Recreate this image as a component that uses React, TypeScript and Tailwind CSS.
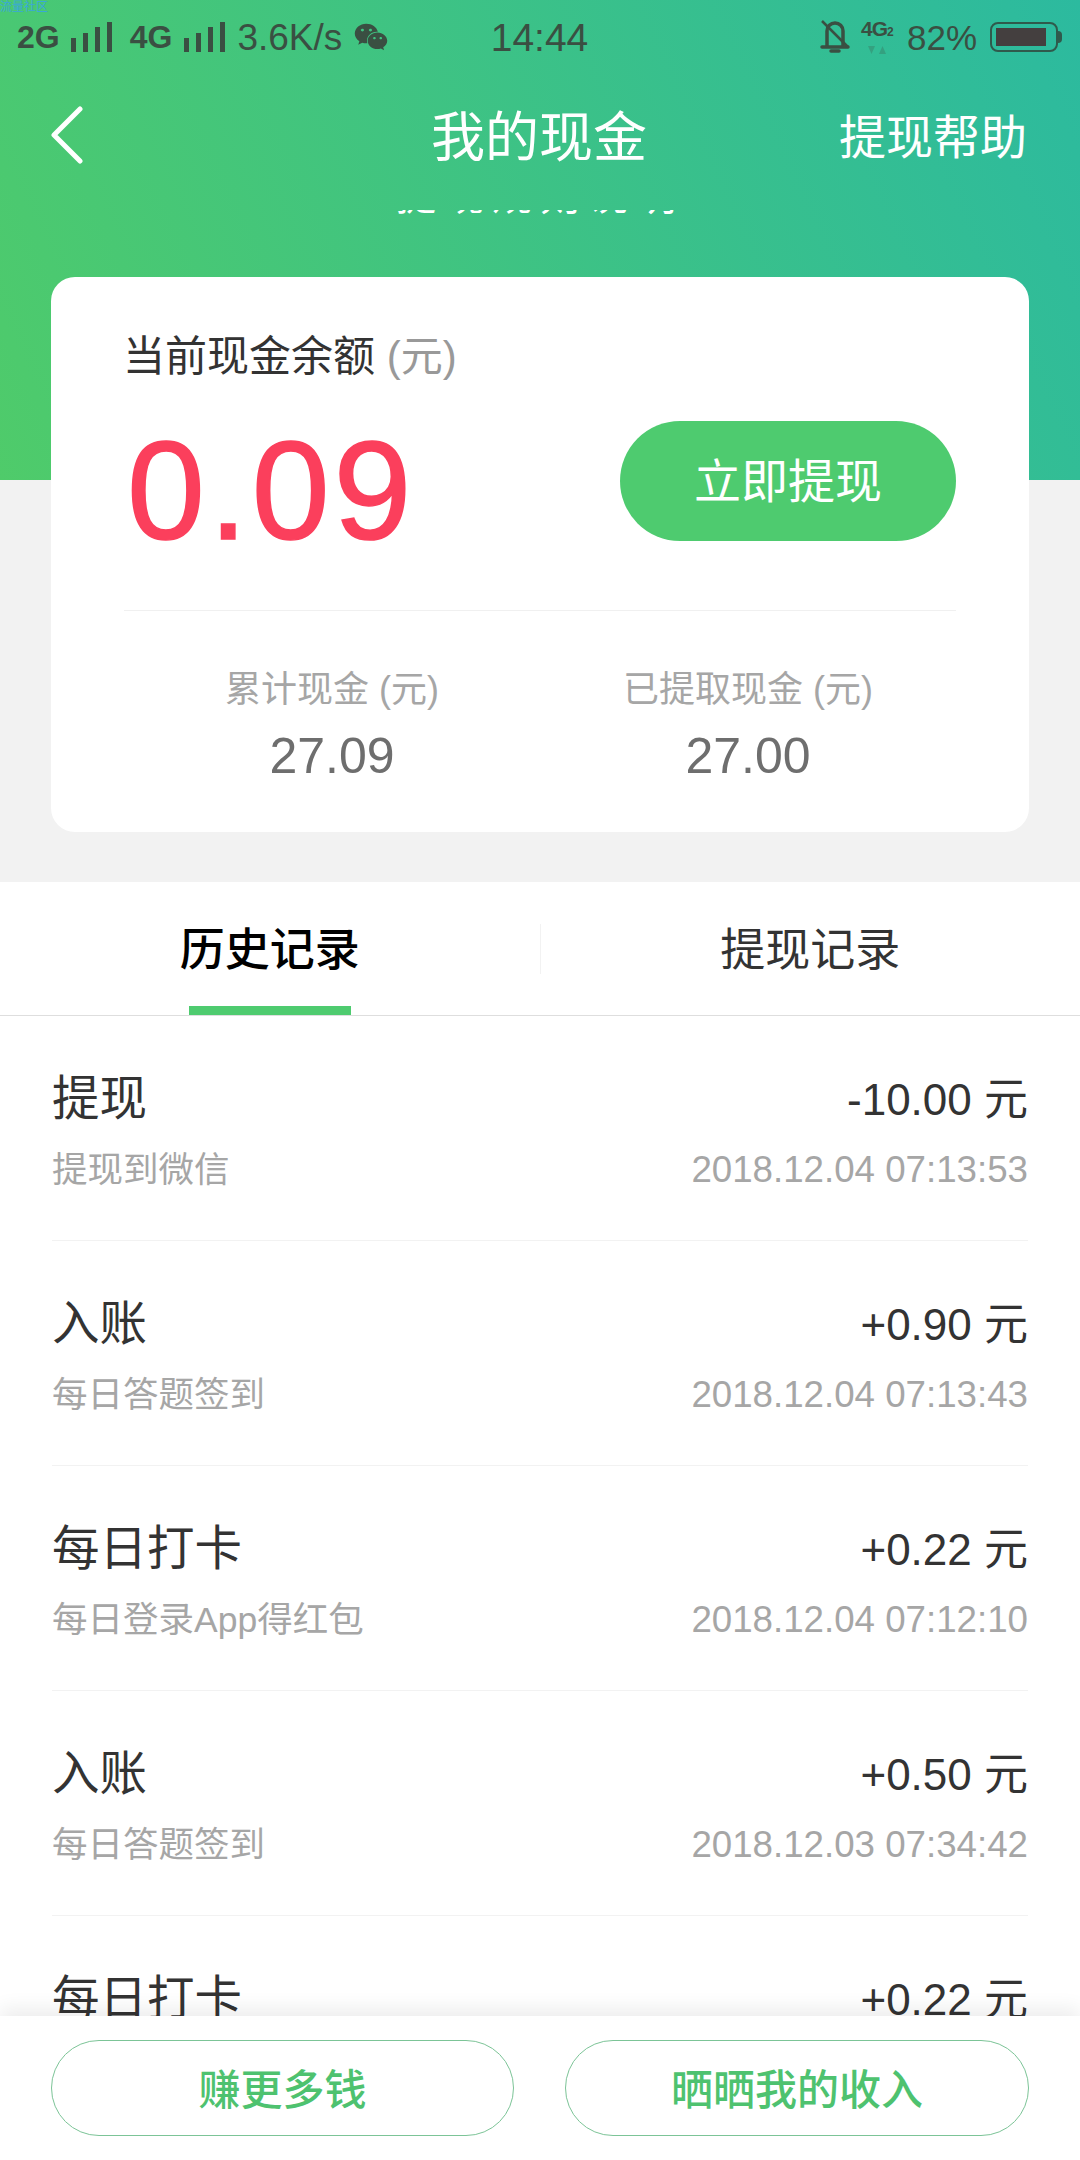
import { FaWeixin } from 'react-icons/fa';

const FONT = 'font-["Liberation_Sans","Noto_Sans_CJK_SC",sans-serif]';

const RECORDS = [
  { title: '提现', sub: '提现到微信', amount: '-10.00 元', time: '2018.12.04 07:13:53' },
  { title: '入账', sub: '每日答题签到', amount: '+0.90 元', time: '2018.12.04 07:13:43' },
  { title: '每日打卡', sub: '每日登录App得红包', amount: '+0.22 元', time: '2018.12.04 07:12:10' },
  { title: '入账', sub: '每日答题签到', amount: '+0.50 元', time: '2018.12.03 07:34:42' },
  { title: '每日打卡', sub: '每日登录App得红包', amount: '+0.22 元', time: '2018.12.03 07:20:11' },
];

function SignalBars() {
  return (
    <svg width="41" height="30" viewBox="0 0 41 30" fill="#3a4f42">
      <rect x="0" y="16" width="5" height="14" />
      <rect x="12" y="11" width="5" height="19" />
      <rect x="24" y="5" width="5" height="25" />
      <rect x="36" y="0" width="5" height="30" />
    </svg>
  );
}

function BellOff() {
  return (
    <svg width="30" height="34" viewBox="0 0 30 34" fill="none" stroke="#3a4f42" strokeWidth="3.5">
      <path d="M7 26V11a8 8 0 0 1 16 0v15" />
      <path d="M2 27h26" strokeLinecap="round" />
      <path d="M11 31h8" strokeLinecap="round" />
      <path d="M2 1l26 26" strokeWidth="2.5" />
    </svg>
  );
}

function StatusBar() {
  return (
    <div className="flex h-[72px] items-center pl-[17px] pr-[18px] pt-[2px] text-[#3a4f42]">
      <div className="flex flex-1 items-center">
        <span className="text-[32px] font-bold leading-none">2G</span>
        <span className="ml-[11px]"><SignalBars /></span>
        <span className="ml-[18px] text-[32px] font-bold leading-none">4G</span>
        <span className="ml-[12px]"><SignalBars /></span>
        <span className="ml-[12px] text-[37px] leading-none">3.6K/s</span>
        <FaWeixin className="ml-[12px] text-[34px]" />
      </div>
      <span className="text-[39px] leading-none">14:44</span>
      <div className="flex flex-1 items-center justify-end">
        <BellOff />
        <div className="ml-[9px] flex w-[36px] flex-col items-center">
          <span className="text-[21px] font-bold leading-[20px] tracking-[-1px]">
            4G<span className="text-[12px]">2</span>
          </span>
          <svg width="20" height="9" viewBox="0 0 20 9" fill="#3a4f42" opacity="0.25" className="mt-[4px]">
            <path d="M1 0h7L4.5 8z" />
            <path d="M15.5 0L19 8h-7z" />
          </svg>
        </div>
        <span className="ml-[12px] text-[35px] leading-none">82%</span>
        <span className="ml-[13px] flex h-[30px] w-[68px] items-center rounded-[8px] border-[2.5px] border-[#2f5a4c] px-[4px]">
          <span className="h-[18px] w-[50px] bg-[#443f3f]" />
        </span>
        <span className="h-[12px] w-[4px] rounded-r-sm bg-[#2f5a4c]" />
      </div>
    </div>
  );
}

function StatColumn({ label, value }: { label: string; value: string }) {
  return (
    <div className="flex flex-1 flex-col items-center">
      <span className="text-[36px] leading-[44px] text-[#a6a6a6]">{label}</span>
      <span className="mt-[17px] text-[50px] leading-[54px] text-[#6e6e6e]">{value}</span>
    </div>
  );
}

export default function App() {
  return (
    <div className={`relative h-[2160px] w-[1080px] overflow-hidden bg-white ${FONT}`}>
      <div className="h-[882px] bg-[#f2f2f2]">
        <div className="h-[480px] bg-[linear-gradient(65deg,#4fcb6a,#2cba9f)]">
          <StatusBar />
          <div className="grid h-[130px] grid-cols-[1fr_auto_1fr] items-center pl-[51px] pr-[53px] pt-[2px] text-white">
            <svg width="32" height="58" viewBox="0 0 32 58" fill="none" stroke="white" strokeWidth="5" strokeLinecap="round" strokeLinejoin="round" className="mt-[-6px]">
              <path d="M29 3L3 29l26 26" />
            </svg>
            <span className="text-[54px]">我的现金</span>
            <span className="justify-self-end text-[47px]">提现帮助</span>
          </div>
          {/* notice line scrolled almost out of view, only the bottom of the glyphs shows */}
          <div className="mt-[8px] h-[5px] overflow-hidden text-center text-white">
            <div className="mt-[-34px] text-[40px] leading-[40px] tracking-[8px]">提现规则说明</div>
          </div>
        </div>
        <div className="relative mx-[51px] mt-[-203px] h-[555px] rounded-[24px] bg-white px-[73px] pt-[53px]">
          <div className="ml-[-1px] text-[42px] leading-[54px] text-[#333333]">
            当前现金余额 <span className="text-[#999999]">(元)</span>
          </div>
          <div className="mt-[37px] flex h-[120px] items-center justify-between">
            <span className="ml-[3px] mt-[20px] text-[140px] leading-none tracking-[4px] text-[#fb3f5c] [-webkit-text-stroke:1.5px_#fb3f5c]">0.09</span>
            <button type="button" className="h-[120px] w-[336px] rounded-full bg-[#4ecb6f] pt-[3px] text-[47px] text-white">
              立即提现
            </button>
          </div>
          <div className="mt-[69px] h-px bg-[#f0f0f0]" />
          <div className="mt-[57px] flex">
            <StatColumn label="累计现金 (元)" value="27.09" />
            <StatColumn label="已提取现金 (元)" value="27.00" />
          </div>
        </div>
      </div>

      <div className="relative flex h-[134px] items-center border-b border-[#dedede]">
        <div className="flex flex-1 justify-center pt-[4px] text-[45px] font-medium text-black">历史记录</div>
        <div className="h-[50px] w-px bg-[#f2f2f2]" />
        <div className="flex flex-1 justify-center pt-[4px] text-[45px] text-[#333333]">提现记录</div>
        <span className="absolute bottom-0 left-[189px] h-[9px] w-[162px] bg-[#4ecb6f]" />
      </div>

      <div className="px-[52px]">
        {RECORDS.map((r, i) => (
          <div key={i} className="h-[225px] border-b border-[#f2f2f2] pt-[51px]">
            <div className="flex items-center justify-between text-[#333333]">
              <span className="text-[47.5px] leading-[62px]">{r.title}</span>
              <span className="pt-[2px] text-[44px] leading-[62px]">{r.amount}</span>
            </div>
            <div className="mt-[14px] flex items-center justify-between leading-[50px] text-[#a6a6a6]">
              <span className="text-[35.5px]">{r.sub}</span>
              <span className="text-[36.7px]">{r.time}</span>
            </div>
          </div>
        ))}
      </div>

      <div className="absolute inset-x-0 bottom-0 flex h-[144px] justify-between bg-white px-[51px] pt-[24px] shadow-[0_-8px_18px_rgba(0,0,0,0.07)]">
        <button type="button" className="h-[96px] w-[463px] rounded-full border border-[#7cc497] pt-[4px] text-[42px] font-medium text-[#4ec26f]">
          赚更多钱
        </button>
        <button type="button" className="h-[96px] w-[464px] rounded-full border border-[#7cc497] pt-[4px] text-[42px] font-medium text-[#4ec26f]">
          晒晒我的收入
        </button>
      </div>

      <span className="absolute left-0 top-0 text-[12px] leading-[14px] text-[#3aa7d8]">流量社区</span>
    </div>
  );
}
